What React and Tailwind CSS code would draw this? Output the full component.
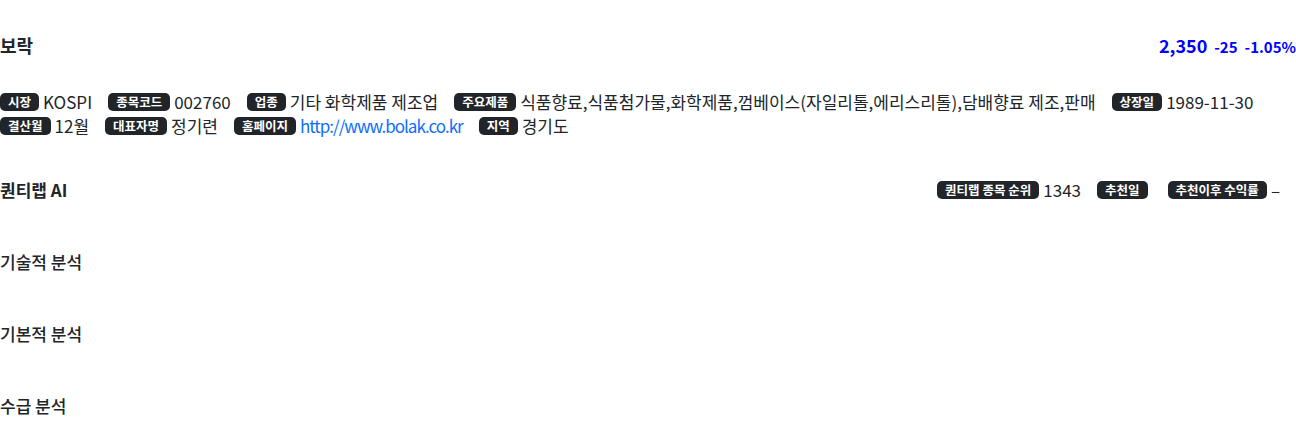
// 종목 상세 — 보락 (002760)
import React from 'react';

const FONT = "font-['Noto_Sans_CJK_KR','Noto_Sans',sans-serif]";

const INFO_ROW_1 = [
  { label: '시장', value: 'KOSPI' },
  { label: '종목코드', value: '002760' },
  { label: '업종', value: '기타 화학제품 제조업' },
  { label: '주요제품', value: '식품향료,식품첨가물,화학제품,껌베이스(자일리톨,에리스리톨),담배향료 제조,판매' },
  { label: '상장일', value: '1989-11-30' },
];

const INFO_ROW_2 = [
  { label: '결산월', value: '12월' },
  { label: '대표자명', value: '정기련' },
  { label: '홈페이지', value: 'http://www.bolak.co.kr', link: true },
  { label: '지역', value: '경기도' },
];

function Badge({ text }) {
  return (
    <span className="inline-block whitespace-pre rounded-[5px] bg-[#212529] px-[8px] py-[3px] text-[12.5px] font-bold leading-none text-white">
      {text}
    </span>
  );
}

function Field({ label, value, link }) {
  return (
    <span className="mr-[16px] inline-flex items-center gap-[4px]">
      <Badge text={label} />
      {link
        ? <a href="#" className="tracking-[-1px] text-[#0d6efd]">{value}</a>
        : <span>{value}</span>}
    </span>
  );
}

function SectionTitle({ text, bold }) {
  return (
    <h6 className={`h-[24px] text-[17px] leading-[24px] ${bold ? 'font-bold' : 'font-medium'}`}>{text}</h6>
  );
}

export default function App() {
  return (
    <div className={`${FONT} w-[1296px] bg-white text-[17px] text-[#212529]`}>

      {/* header */}
      <div className="flex h-[24px] items-center justify-between mt-[33px]">
        <h5 className="text-[18px] font-bold leading-[24px]">보락</h5>
        <div className="flex items-baseline gap-[7px] font-bold text-[#0000ff]">
          <span className="text-[18px]">2,350</span>
          <span className="text-[15px]">-25</span>
          <span className="text-[15px]">-1.05%</span>
        </div>
      </div>

      {/* company info */}
      <div className="mt-[33px] leading-[24px]">
        <div className="flex h-[24px] flex-wrap items-center">
          {INFO_ROW_1.map(f => <Field key={f.label} {...f} />)}
        </div>
        <div className="flex h-[24px] flex-wrap items-center">
          {INFO_ROW_2.map(f => <Field key={f.label} {...f} />)}
        </div>
      </div>

      {/* quantilab AI */}
      <div className="mt-[40px] flex h-[24px] items-center justify-between">
        <SectionTitle text="퀀티랩 AI" bold />
        <div className="flex items-center">
          <Field label="퀀티랩 종목 순위" value="1343" />
          <Field label="추천일" value="" />
          <Field label="추천이후 수익률" value="–" />
        </div>
      </div>

      <div className="mt-[48px]"><SectionTitle text="기술적 분석" /></div>
      <div className="mt-[48px]"><SectionTitle text="기본적 분석" /></div>
      <div className="mt-[48px] pb-[24px]"><SectionTitle text="수급 분석" /></div>
    </div>
  );
}
